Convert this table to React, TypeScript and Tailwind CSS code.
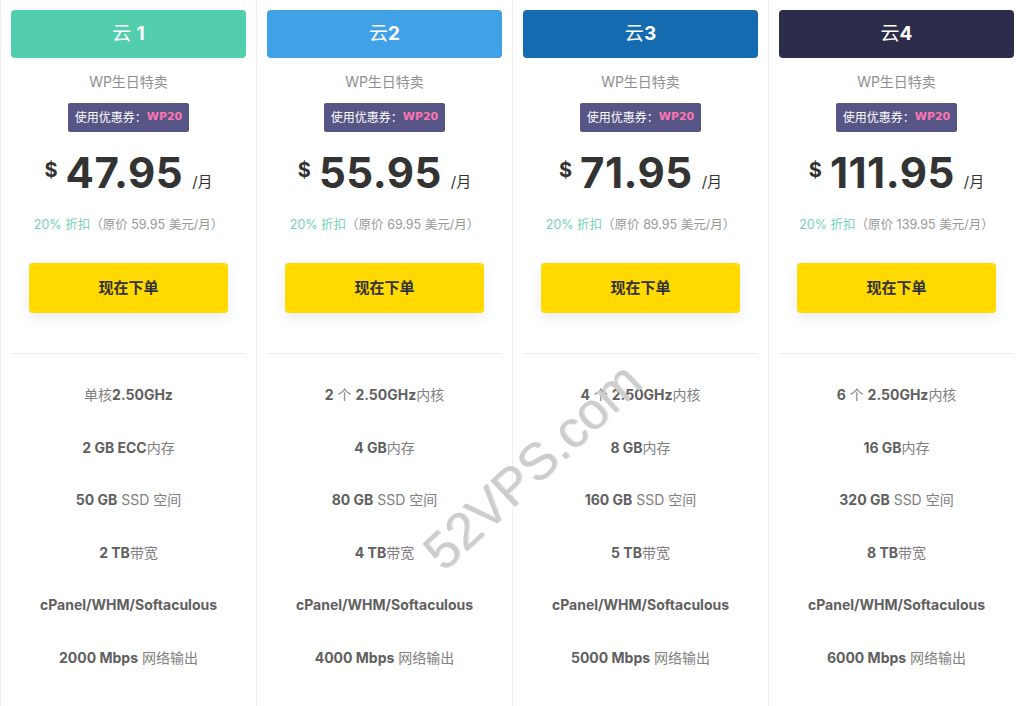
import { FC, ReactNode } from "react";

interface Plan
{
	name: string,
	num: string,
	color: string,
	price: string,
	original: string,
	features: ReactNode[]
}

const B: FC<{ children: ReactNode }> = ({ children }) => <span className="font-bold text-[#606060]">{children}</span>;

const plans: Plan[] = [
	{
		name: "云 ",
		num: "1",
		color: "bg-[#52cead]",
		price: "47.95",
		original: "59.95",
		features: [
			<>单核<B>2.50GHz</B></>,
			<><B>2 GB ECC</B>内存</>,
			<><B>50 GB</B> SSD 空间</>,
			<><B>2 TB</B>带宽</>,
			<B>cPanel/WHM/Softaculous</B>,
			<><B>2000 Mbps</B> 网络输出</>,
		]
	},
	{
		name: "云",
		num: "2",
		color: "bg-[#41a1e6]",
		price: "55.95",
		original: "69.95",
		features: [
			<><B>2</B> 个 <B>2.50GHz</B>内核</>,
			<><B>4 GB</B>内存</>,
			<><B>80 GB</B> SSD 空间</>,
			<><B>4 TB</B>带宽</>,
			<B>cPanel/WHM/Softaculous</B>,
			<><B>4000 Mbps</B> 网络输出</>,
		]
	},
	{
		name: "云",
		num: "3",
		color: "bg-[#156bb0]",
		price: "71.95",
		original: "89.95",
		features: [
			<><B>4</B> 个 <B>2.50GHz</B>内核</>,
			<><B>8 GB</B>内存</>,
			<><B>160 GB</B> SSD 空间</>,
			<><B>5 TB</B>带宽</>,
			<B>cPanel/WHM/Softaculous</B>,
			<><B>5000 Mbps</B> 网络输出</>,
		]
	},
	{
		name: "云",
		num: "4",
		color: "bg-[#2d2d4b]",
		price: "111.95",
		original: "139.95",
		features: [
			<><B>6</B> 个 <B>2.50GHz</B>内核</>,
			<><B>16 GB</B>内存</>,
			<><B>320 GB</B> SSD 空间</>,
			<><B>8 TB</B>带宽</>,
			<B>cPanel/WHM/Softaculous</B>,
			<><B>6000 Mbps</B> 网络输出</>,
		]
	},
];

const PlanCard: FC<{ plan: Plan }> = ({ plan }) =>
{
	return (
		<div className="flex flex-col items-center border-l border-[#f0f0f0] px-[10px] pt-[10px] h-[706px]">
			<div className={`${plan.color} w-full h-[48px] rounded-[4px] flex items-center justify-center text-white text-[19px]`}>
				<span className="whitespace-pre">{plan.name}</span><span className="font-bold">{plan.num}</span>
			</div>

			<div className="mt-[14px] h-[20px] leading-[20px] text-[14px] text-[#8f8f8f]">WP生日特卖</div>

			<div className="mt-[11px] h-[29px] px-[7px] flex items-center rounded-[2px] bg-[#565585] text-white text-[12px]">
				使用优惠券：<span className="text-[#ff75b0] font-bold [font-family:'DejaVu_Sans',sans-serif] text-[11px]">WP20</span>
			</div>

			<div className="mt-[19px] h-[44px] flex items-end text-[#333]">
				<span className="text-[20px] font-bold self-start mt-[4px] mr-[8px]">$</span>
				<span className="text-[42px] leading-[44px] font-bold tracking-[0.5px]">{plan.price}</span>
				<span className="text-[15px] ml-[9px] mb-[2px]">/月</span>
			</div>

			<div className="mt-[20px] h-[20px] leading-[20px] text-[12.5px] text-[#999]">
				<span className="text-[#72d2b4]">20% 折扣</span>（原价 {plan.original} 美元/月）
			</div>

			<button className="mt-[28px] w-[199px] h-[50px] rounded-[4px] bg-[#ffd900] text-[#333] text-[15px] font-bold shadow-[0_6px_14px_rgba(0,0,0,0.08)]">
				现在下单
			</button>

			<div className="mt-[40px] w-full border-t border-[#eeeeee]" />

			<div className="w-full flex flex-col items-center pt-[31px]">
				{plan.features.map((f, i) => (
					<div key={i} className="h-[52.5px] leading-[20px] text-[14px] text-[#808080]">
						{f}
					</div>
				))}
			</div>
		</div>
	);
}

export default function App()
{
	return (
		<div className="relative w-[1024px] h-[706px] overflow-hidden bg-white [font-family:Inter,'Noto_Sans_CJK_SC',sans-serif]">
			<div className="grid grid-cols-4">
				{plans.map((p) => <PlanCard key={p.num} plan={p} />)}
			</div>
			<div className="absolute left-[532px] top-[466px] -translate-x-1/2 -translate-y-1/2 -rotate-[43deg] text-[52px] text-[#cdcdcd] [font-family:'Liberation_Sans',sans-serif] pointer-events-none [text-shadow:1px_1px_1px_rgba(0,0,0,0.12)] whitespace-nowrap">
				52VPS.com
			</div>
		</div>
	);
}
